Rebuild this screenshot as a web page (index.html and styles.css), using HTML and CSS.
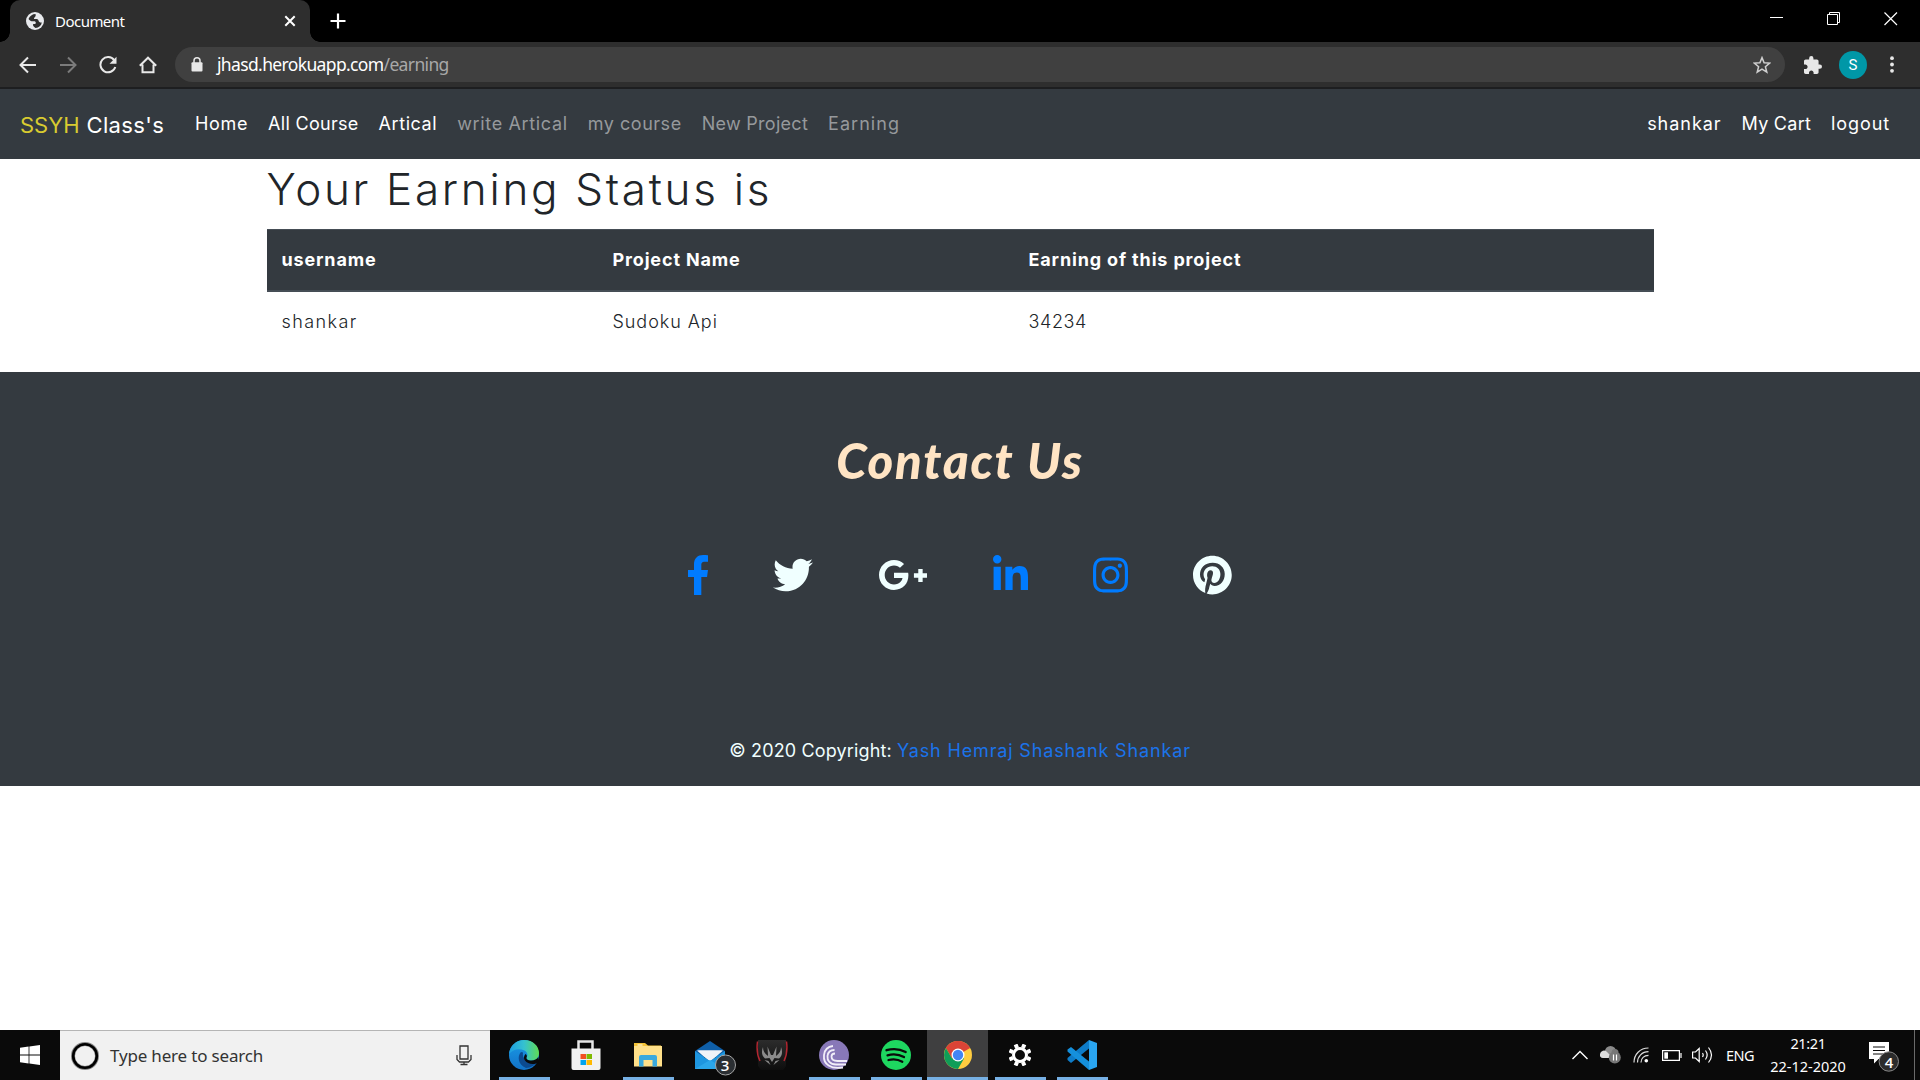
FILE: index.html
```html
<!DOCTYPE html>
<html lang="en">
<head>
<meta charset="utf-8">
<title>Document</title>
<link rel="stylesheet" href="styles.css">
</head>
<body>
<div class="screen">
  <header class="tabstrip">
    <div class="tab">
      <svg class="globe" width="18" height="18" viewBox="0 0 18 18"><circle cx="9" cy="9" r="9" fill="#e8eaed"/><path d="M9.500 2c-3 0-6 2-7 5 1.500 1.800 3.200 2.600 5 2.200 1.400-.2 2.400.4 2.300 1.700-.1 1.100-1.300 1.300-2.600 1.200-.6 1.300.2 3 2.400 3.900 3.300-.4 5.700-2.500 6.200-5.600-1.700.2-3-.4-3.200-1.700-.3-1.500-1.700-1.900-3.300-1.600-1.300.2-1.800-.9-.8-1.700 1.100-.9 1.500-1.900 1-3.400z" fill="#2e2e2e"/></svg>
      <span class="tab-title">Document</span>
      <svg class="tab-close" width="12" height="12" viewBox="0 0 12 12"><path d="M1.300 1.300l9.400 9.400M10.700 1.300l-9.400 9.400" stroke="#fff" stroke-width="2"/></svg>
    </div>
    <svg class="new-tab" width="16" height="16" viewBox="0 0 16 16"><path d="M8 .5v15M.5 8h15" stroke="#fff" stroke-width="2.200"/></svg>
    <div class="window-buttons">
      <svg width="14" height="14" viewBox="0 0 14 14"><path d="M0 5.500h13" stroke="#fff"/></svg>
      <svg width="14" height="14" viewBox="0 0 14 14"><path d="M.5 2.500h10v10H.5zM2.500 2.500v-2h10v10h-2" fill="none" stroke="#fff"/></svg>
      <svg width="14" height="14" viewBox="0 0 14 14"><path d="M.5 .5l12.500 12.500M13 .5L.5 13" stroke="#fff" stroke-width="1.200"/></svg>
    </div>
  </header>
  <div class="toolbar">
    <div class="nav-buttons">
      <svg width="18" height="18" viewBox="0 0 18 18"><path d="M17 9H2M9 1.500L1.500 9 9 16.500" fill="none" stroke="#e8e8e8" stroke-width="2"/></svg>
      <svg width="18" height="18" viewBox="0 0 18 18"><path d="M1 9h15M9 1.500L16.500 9 9 16.500" fill="none" stroke="#7b7b7b" stroke-width="2"/></svg>
      <svg width="18" height="18" viewBox="0 0 18 18"><path d="M15.200 4.200A7.600 7.600 0 1 0 16.300 11" fill="none" stroke="#e8e8e8" stroke-width="2"/><path d="M17.500 .8v7h-7z" fill="#e8e8e8"/></svg>
      <svg width="18" height="18" viewBox="0 0 18 18"><path d="M.8 9.700L9 1.700l8.200 8M3.500 8.500v7.700h11V8.500" fill="none" stroke="#e8e8e8" stroke-width="2"/></svg>
    </div>
    <div class="omnibox">
      <svg class="lock" width="12" height="15" viewBox="0 0 12 15"><rect x=".5" y="5.200" width="11" height="9.300" rx="1" fill="#e8e8e8"/><path d="M3 6V3.800a3 3 0 0 1 6 0V6" fill="none" stroke="#e8e8e8" stroke-width="1.500"/></svg>
      <span class="url"><span class="url-host">jhasd.herokuapp.com</span><span class="url-path">/earning</span></span>
      <svg class="star" width="18" height="18" viewBox="0 0 18 18"><path d="M9 1.600l2.100 5.100 5.600.4-4.300 3.600 1.400 5.400L9 13.200l-4.800 2.900 1.400-5.400L1.300 7.100l5.600-.4z" fill="none" stroke="#cfcfcf" stroke-width="1.500"/></svg>
    </div>
    <svg class="puzzle" width="18" height="18" viewBox="2 1 21 21"><path d="M20.500 11H19V7c0-1.100-.9-2-2-2h-4V3.500a2.500 2.500 0 0 0-5 0V5H4c-1.100 0-2 .9-2 2v3.800h1.500c1.500 0 2.700 1.200 2.700 2.700S5 16.200 3.500 16.200H2V20c0 1.100.9 2 2 2h3.800v-1.500c0-1.500 1.200-2.700 2.700-2.700s2.700 1.200 2.700 2.700V22H17c1.100 0 2-.9 2-2v-4h1.500a2.500 2.500 0 0 0 0-5z" fill="#e8e8e8"/></svg>
    <div class="avatar">S</div>
    <svg class="kebab" width="4" height="17" viewBox="0 0 4 17"><g fill="#e8e8e8"><circle cx="2" cy="2.200" r="1.900"/><circle cx="2" cy="8.500" r="1.900"/><circle cx="2" cy="14.800" r="1.900"/></g></svg>
  </div>

  <main class="page">
    <nav class="navbar">
      <a class="brand"><span class="brand-mark">SSYH</span> <span class="brand-name">Class's</span></a>
      <a class="link l-home">Home</a>
      <a class="link l-all">All Course</a>
      <a class="link l-art">Artical</a>
      <a class="link dim l-write">write Artical</a>
      <a class="link dim l-my">my course</a>
      <a class="link dim l-new">New Project</a>
      <a class="link dim l-earn">Earning</a>
      <a class="link first-right l-user">shankar</a>
      <a class="link l-cart">My Cart</a>
      <a class="link l-out">logout</a>
    </nav>
    <section class="container">
      <h1>Your Earning Status is</h1>
      <table>
        <thead><tr><th class="c1">username</th><th class="c2">Project Name</th><th>Earning of this project</th></tr></thead>
        <tbody><tr><td class="user">shankar</td><td class="project">Sudoku Api</td><td class="amount">34234</td></tr></tbody>
      </table>
    </section>
    <footer class="footer">
      <h2>Contact Us</h2>
      <div class="social">
        <svg class="blue" width="20.600" height="40" viewBox="0 0 264 512"><path d="M76.700 512V283H0v-91h76.700v-71.700C76.700 42.400 124.300 0 193.800 0c33.300 0 61.900 2.500 70.200 3.600V85h-48.200c-37.800 0-45.100 18-45.100 44.300V192H256l-11.700 91h-73.600v229"/></svg>
        <svg width="40" height="40" viewBox="0 0 512 512"><path d="M459.370 151.716c.325 4.548.325 9.097.325 13.645 0 138.720-105.583 298.558-298.558 298.558-59.452 0-114.680-17.219-161.137-47.106 8.447.974 16.568 1.299 25.340 1.299 49.055 0 94.213-16.568 130.274-44.832-46.132-.975-84.792-31.188-98.112-72.772 6.498.974 12.995 1.624 19.818 1.624 9.421 0 18.843-1.300 27.614-3.573-48.081-9.747-84.143-51.980-84.143-102.985v-1.299c13.969 7.797 30.214 12.670 47.431 13.319-28.264-18.843-46.781-51.005-46.781-87.391 0-19.492 5.197-37.360 14.294-52.954 51.655 63.675 129.300 105.258 216.365 109.807-1.624-7.797-2.599-15.918-2.599-24.040 0-57.828 46.782-104.934 104.934-104.934 30.213 0 57.502 12.670 76.670 33.137 23.715-4.548 46.456-13.320 66.599-25.340-7.798 24.366-24.366 44.833-46.132 57.827 21.117-2.273 41.584-8.122 60.426-16.243-14.292 20.791-32.161 39.308-52.628 54.253z"/></svg>
        <svg width="50" height="40" viewBox="0 0 640 512"><path d="M386.061 228.496c1.834 9.692 3.143 19.384 3.143 31.956C389.204 370.205 315.599 448 204.800 448c-106.084 0-192-85.915-192-192s85.916-192 192-192c51.864 0 95.083 18.859 128.611 50.292l-52.126 50.030c-14.145-13.621-39.028-29.599-76.485-29.599-65.484 0-118.920 54.221-118.920 121.277 0 67.056 53.436 121.277 118.920 121.277 75.961 0 104.513-54.745 108.965-82.773H204.800v-66.009h181.261zm185.406 6.437V179.200h-56.001v55.733h-55.733v56.001h55.733v55.733h56.001v-55.733H627.200v-56.001h-55.733z"/></svg>
        <svg class="blue" width="35" height="40" viewBox="0 0 448 512"><path d="M100.300 448H7.400V148.900h92.900zM53.800 108.100C24.100 108.100 0 83.500 0 53.800S24.100 0 53.800 0s53.800 24.100 53.800 53.800-24.100 54.300-53.800 54.300zM447.900 448h-92.700V302.400c0-34.700-.7-79.200-48.300-79.200-48.300 0-55.700 37.700-55.700 76.700V448h-92.800V148.900h89.100v40.800h1.300c12.400-23.500 42.700-48.300 87.900-48.300 94 0 111.300 61.900 111.300 142.300V448z"/></svg>
        <svg class="blue" width="35" height="40" viewBox="0 0 448 512"><path d="M224.100 141c-63.600 0-114.900 51.300-114.900 114.900s51.300 114.900 114.900 114.900S339 319.500 339 255.900 287.700 141 224.100 141zm0 189.600c-41.100 0-74.700-33.500-74.700-74.700s33.500-74.700 74.700-74.700 74.700 33.500 74.700 74.700-33.600 74.700-74.700 74.700zm146.400-194.300c0 14.900-12 26.800-26.800 26.800-14.900 0-26.800-12-26.800-26.800s12-26.800 26.800-26.800 26.800 12 26.800 26.800zm76.100 27.200c-1.700-35.900-9.900-67.700-36.200-93.900-26.200-26.200-58-34.400-93.900-36.200-37-2.100-147.900-2.100-184.900 0-35.800 1.700-67.600 9.900-93.900 36.100s-34.400 58-36.200 93.900c-2.100 37-2.100 147.900 0 184.900 1.700 35.900 9.900 67.700 36.200 93.900s58 34.400 93.900 36.200c37 2.100 147.900 2.100 184.900 0 35.900-1.700 67.700-9.900 93.900-36.200 26.200-26.200 34.400-58 36.200-93.900 2.100-37 2.100-147.800 0-184.800zM398.800 388c-7.800 19.600-22.900 34.700-42.600 42.600-29.500 11.700-99.500 9-132.100 9s-102.700 2.600-132.100-9c-19.600-7.800-34.700-22.900-42.600-42.600-11.700-29.500-9-99.500-9-132.100s-2.600-102.700 9-132.100c7.800-19.600 22.900-34.700 42.600-42.600 29.500-11.700 99.500-9 132.100-9s102.700-2.600 132.100 9c19.600 7.800 34.700 22.900 42.600 42.600 11.700 29.500 9 99.500 9 132.100s2.700 102.700-9 132.100z"/></svg>
        <svg width="38.750" height="40" viewBox="0 0 496 512"><path d="M496 256c0 137-111 248-248 248-25.600 0-50.200-3.900-73.400-11.100 10.100-16.500 25.200-43.500 30.800-65 3-11.600 15.400-59 15.400-59 8.100 15.400 31.700 28.500 56.800 28.500 74.800 0 128.700-68.800 128.700-154.300 0-81.900-66.900-143.200-152.900-143.200-107 0-163.900 71.800-163.900 150.100 0 36.400 19.400 81.700 50.300 96.100 4.700 2.200 7.200 1.200 8.300-3.300.8-3.400 5-20.300 6.900-28.100.6-2.500.3-4.700-1.700-7.100-10.100-12.500-18.300-35.300-18.300-56.600 0-54.700 41.400-107.600 112-107.600 60.900 0 103.600 41.500 103.600 100.900 0 67.100-33.900 113.600-78 113.600-24.300 0-42.600-20.100-36.700-44.800 7-29.500 20.500-61.300 20.500-82.600 0-19-10.200-34.900-31.400-34.900-24.900 0-44.900 25.700-44.900 60.200 0 22 7.400 36.800 7.400 36.800s-24.500 103.800-29 123.200c-5 21.400-3 51.600-.9 71.200C65.400 450.900 0 361.100 0 256 0 119 111 8 248 8s248 111 248 248z"/></svg>
      </div>
      <p class="copyright"><span class="c-text">© 2020 Copyright:</span><a class="c-link">Yash Hemraj Shashank Shankar</a></p>
    </footer>
  </main>

  <div class="taskbar">
    <div class="start"><svg width="20" height="20" viewBox="0 0 20 20"><path d="M0 2.800L8.600 1.500v8H0zM9.400 1.400L20 0v9.500H9.400zM0 10.400h8.600v8L0 17.200zM9.400 10.400H20V20L9.400 18.500z" fill="#fff"/></svg></div>
    <div class="search">
      <svg width="28" height="28" viewBox="0 0 28 28"><circle cx="14" cy="14" r="12" fill="none" stroke="#888" stroke-width="4"/><circle cx="14" cy="14" r="11.800" fill="none" stroke="#000" stroke-width="2.600"/></svg>
      <span class="search-text">Type here to search</span>
      <svg class="mic" width="16" height="21" viewBox="0 0 16 21"><path d="M4 1h8v13H4zM1 10v4.500L3.500 17h9l2.500-2.500V10M8 17v3M4.500 19.500h7" fill="none" stroke="#333" stroke-width="1.300"/></svg>
    </div>
    <div class="apps">
      <div class="app run"><svg width="30" height="30" viewBox="0 0 30 30"><defs><linearGradient id="eg" x1="0" x2="1"><stop offset="0" stop-color="#1b9de2"/><stop offset=".5" stop-color="#35c1d0"/><stop offset="1" stop-color="#5fdc54"/></linearGradient><linearGradient id="eb" x1="0" x2="0" y1="0" y2="1"><stop offset="0" stop-color="#1a9be6"/><stop offset="1" stop-color="#1272c8"/></linearGradient></defs><circle cx="15" cy="15" r="15" fill="url(#eb)"/><path d="M0 14C1 5 8 0 15 0c9 0 15 6 15 13 0 5-3.500 7.500-7.500 7.500-4 0-5.500-1.500-5-3 1.500-1.500 1.500-5-2-7C10 8 4 9 0 14z" fill="url(#eg)"/><path d="M12 12c-4 4-3 13 5 16 5 0 9-3 11.500-6.500-3 1.300-8 1.600-11.500-1-3-2.200-3.500-5-3-8z" fill="#0c4a90"/><path d="M17.500 17.500c-.5 1.500 1 3 5 3 3 0 5.500-1.300 6.800-3.500L30 23l-3 .500c-4 1.500-9 0-11-3-1.500-2-1.500-4 .5-6.500 1.500 1 1.700 2.500 1 3.500z" fill="#0a0a0a"/></svg></div>
      <div class="app"><svg width="30" height="30" viewBox="0 0 30 30"><path d="M7.500 10V1.500h14V10" fill="none" stroke="#e8e8e8" stroke-width="2.500"/><path d="M.5 8.500h29V28a2 2 0 0 1-2 2h-25a2 2 0 0 1-2-2z" fill="#f1f1f1"/><path d="M9.500 14H15v5H9.500z" fill="#f25022"/><path d="M15.500 14H21v5h-5.500z" fill="#7fba00"/><path d="M9.500 20H15v5H9.500z" fill="#00a4ef"/><path d="M15.500 20H21v5h-5.500z" fill="#ffb900"/></svg></div>
      <div class="app run"><svg width="28" height="26" viewBox="0 0 28 26"><path d="M0 1h11l3 2.500h13V12H0z" fill="#f4c338"/><path d="M3.500 2.500h5v1h-5z" fill="#fff"/><path d="M0 4h28v20.500H0z" fill="#ffe08a"/><path d="M5 24.500V15a2 2 0 0 1 2-2h14a2 2 0 0 1 2 2v9.500h-4.500V18h-9v6.500z" fill="#3aa9de"/></svg></div>
      <div class="app mail"><svg width="42" height="36" viewBox="0 0 42 36"><path d="M1 11L16 1l15 10v6H1z" fill="#0f5fa8"/><path d="M3 10.500h26L16 22z" fill="#f2f4f8"/><path d="M1 11l15 10 15-10v18H1z" fill="#1e96e0"/><path d="M4 10.500h24L16 19.500z" fill="#f2f4f8"/><path d="M1 29L16 20l15 9z" fill="#2ba6ea"/><circle cx="31.500" cy="25" r="10" fill="#2b2f33" stroke="#a5a5a5"/></svg><span class="mail-count">3</span></div>
      <div class="app"><svg width="32" height="30" viewBox="0 0 32 30"><defs><linearGradient id="pd" x1="0" x2="0" y1="0" y2="1"><stop offset="0" stop-color="#2c2c2c"/><stop offset="1" stop-color="#0e0e0e"/></linearGradient></defs><path d="M2 0h28v26l-3 4H5l-3-4z" fill="url(#pd)"/><path d="M1.500 1.500C.5 9 2 17 4 21M30.500 1.500c1 7.500-.5 15.500-2.500 19.500" stroke="#b32630" stroke-width="1.500" fill="none"/><path d="M7 7c0 4 1.500 6.500 5 9l-.5-9.500L15 15h2l3.500-8.500-.5 9.500c3.500-2.500 5-5 5-9 2 5 1 9-2 11.500L18.500 18 16 22l-2.500-4L9 18.500C6 16 5 12 7 7zM8.500 20l4 1 2 4zM23.500 20l-4 1-2 4z" fill="#8b8b8b"/></svg></div>
      <div class="app run"><svg width="30" height="30" viewBox="0 0 30 30"><circle cx="15" cy="15" r="15" fill="#8878b8"/><path d="M27 24.500H17c-6 0-9-4-8.500-8.500.4-3.500 3-6 7-6M24 27.500c-12 2-20-3-19-12.500.6-5 4-8.500 9-9M28 21h-9.500c-4 0-6-2-6-4.500 0-1.500 1-3 3.500-3" fill="none" stroke="#f1eef8" stroke-width="1.800"/></svg></div>
      <div class="app run"><svg width="30" height="30" viewBox="0 0 30 30"><circle cx="15" cy="15" r="15" fill="#1ed760"/><path d="M5.500 10.200c7-2 13.500-1.200 19.200 1.800M6.500 15.300c6-1.600 11.500-1 16.500 1.800M7.500 20c5-1.300 9.500-.8 13.800 1.700" fill="none" stroke="#0a0a0a" stroke-width="2.300" stroke-linecap="round"/></svg></div>
      <div class="app run active"><svg width="28" height="28" viewBox="0 0 28 28"><circle cx="14" cy="14" r="14" fill="#ffcd40"/><path d="M14 14L1.900 7A14 14 0 0 1 26.100 7z" fill="#db4437"/><path d="M14 7h12.100A14 14 0 0 0 1.900 7L8 17.500z" fill="#db4437"/><path d="M1.900 7A14 14 0 0 0 14 28l6-10.500L14 14l-6 3.500z" fill="#0f9d58"/><circle cx="14" cy="14" r="6.500" fill="#fff"/><circle cx="14" cy="14" r="5.200" fill="#4285f4"/></svg></div>
      <div class="app run"><svg width="22" height="22" viewBox="0 0 22 22"><circle cx="11" cy="11" r="6.500" fill="none" stroke="#fff" stroke-width="3"/><g stroke="#fff" stroke-width="4"><path d="M6.600 .4l1.500 3.600M13.900 18l1.500 3.600M15.400 .4L13.900 4M8.100 18l-1.500 3.600M.4 6.600L4 8.100M18 13.900l3.600 1.500M.4 15.400L4 13.900M18 8.100l3.600-1.500"/></g></svg></div>
      <div class="app run"><svg width="30" height="30" viewBox="0 0 30 30"><path d="M22 0l8 3v24l-8 3z" fill="#2aa5f0"/><path d="M22 0v8.500L4 23l-3.500-3v-2z" fill="#0e7cc8"/><path d="M22 30v-8.500L4 7 .5 9.500v2z" fill="#1590dc"/></svg></div>
    </div>
    <div class="tray">
      <svg class="t-up" width="16" height="10" viewBox="0 0 16 10"><path d="M.5 9L8 1.500 15.500 9" fill="none" stroke="#fff" stroke-width="1.400"/></svg>
      <svg class="t-cloud" width="21" height="18" viewBox="0 0 21 18"><circle cx="10.500" cy="5.500" r="5.500" fill="#8b8b8b"/><circle cx="15" cy="6.500" r="3.500" fill="#777"/><path d="M0 8a4 4 0 0 1 7-2l6 6H3a3 3 0 0 1-3-4z" fill="#ddd"/><circle cx="14.800" cy="11.600" r="6" fill="#777"/><path d="M13.500 8.500v6M16.500 8.500v6" stroke="#fff" stroke-width="1.200"/></svg>
      <svg class="t-wifi" width="16" height="16" viewBox="0 0 16 16"><path d="M1 15.500C1 7.500 7 1 15.500 1M4.500 15.500C4.500 9.500 9 4.700 15.500 4.700M8 15.500c0-4 3-7.200 7.500-7.200" fill="none" stroke="#ddd" stroke-width="1.200"/><circle cx="13.300" cy="13.800" r="1.800" fill="#fff"/></svg>
      <svg class="t-batt" width="20" height="11" viewBox="0 0 20 11"><path d="M.6 .6h16.800v9.800H.6zM19 3v5" fill="none" stroke="#fff" stroke-width="1.200"/><path d="M2.300 2.300H6v6.400H2.300z" fill="#fff"/></svg>
      <svg class="t-vol" width="21" height="18" viewBox="0 0 21 18"><path d="M.6 6h2.900L7.200 2.500v13L3.500 12H.6zM10.500 7q1.400 2 0 4M13.500 4.500q3.300 4.500 0 9M16.500 1.500q6 7.500 0 15" fill="none" stroke="#fff" stroke-width="1.200"/></svg>
      <span class="lang">ENG</span>
      <div class="clock"><span class="time">21:21</span><span class="date">22-12-2020</span></div>
      <div class="notice"><svg width="30" height="32" viewBox="0 0 30 32"><path d="M0 1h20v17H9.500L5 22.500V18H0z" fill="#fff"/><path d="M4 6h12M4 9.500h12M4 13h12" stroke="#0a0a0a" stroke-width="1.200"/><circle cx="19.800" cy="20.500" r="9.700" fill="#2c2c2c" stroke="#8a8a8a"/></svg><span class="notice-count">4</span></div>
      <div class="peek"></div>
    </div>
  </div>
</div>
</body>
</html>
```
FILE: styles.css
```css
* { box-sizing: border-box; }
body { margin: 0; background: #fff; }
svg { display: block; flex: none; }
.screen { width: 1920px; height: 1080px; display: flex; flex-direction: column; overflow: hidden; font-family: "Noto Sans", "Open Sans", sans-serif; }

.tabstrip { height: 42px; background: #000; display: flex; align-items: flex-start; flex: none; padding-left: 10px; }
.tab { position: relative; width: 300px; height: 42px; background: #2e2e2e; border-radius: 10px 10px 0 0; display: flex; align-items: center; padding: 0 14px 0 16px; }
.tab::before, .tab::after { content: ""; position: absolute; bottom: 0; width: 10px; height: 10px; }
.tab::before { left: -10px; background: radial-gradient(circle at 0 0, #000 9.500px, #2e2e2e 10px); }
.tab::after { right: -10px; background: radial-gradient(circle at 100% 0, #000 9.500px, #2e2e2e 10px); }
.tab-title { margin-left: 11px; color: #fff; font-size: 15px; line-height: 20px; letter-spacing: -.53px; padding-bottom: 1px; }
.tab-close { margin-left: auto; }
.new-tab { margin: 13px 0 0 20px; }
.window-buttons { margin: 12px 22px 0 auto; display: flex; gap: 43px; }

.toolbar { height: 47px; flex: none; background: #2e2e2e; border-bottom: 2px solid #1d1e20; display: flex; align-items: center; }
.nav-buttons { display: flex; gap: 22px; margin-left: 19px; }
.omnibox { width: 1610px; height: 35px; margin-left: 18px; border-radius: 18px; background: #404040; display: flex; align-items: center; padding: 0 14px 0 16px; }
.url { margin-left: 14px; font-size: 17.500px; line-height: 24px; display: flex; padding-bottom: 1px; letter-spacing: -.64px; }
.url-host { color: #fff; }
.url-path { color: #a8a8a8; }
.star { margin-left: auto; }
.puzzle { margin-left: 19px; }
.avatar { width: 28px; height: 28px; border-radius: 50%; margin-left: 17px; background: #0097a7; color: #fff; font: 15px/28px Roboto, sans-serif; text-align: center; }
.kebab { margin-left: 23px; }

.page { flex: 1; background: #fff; font-family: Inter, Roboto, sans-serif; font-size: 18px; color: #212529; min-height: 0; }
.navbar { height: 70px; background: #343a40; display: flex; align-items: center; padding: 0 20px; }
.brand { display: flex; gap: 7px; font-size: 22px; line-height: 30px; width: 165px; padding-top: 2px; color: #fff; }
.brand-mark { color: #d9cb30; }
.brand-name { letter-spacing: .35px; }
.link { padding: 0 10px; line-height: 30px; color: #fff; white-space: nowrap; }
.dim { color: #96999c; }
.l-home { letter-spacing: .65px; }
.l-all { letter-spacing: .3px; }
.l-art { letter-spacing: .56px; }
.l-write { letter-spacing: .65px; }
.l-my { letter-spacing: .53px; }
.l-new { letter-spacing: .28px; }
.l-earn { letter-spacing: 1.040px; }
.l-user { letter-spacing: .97px; }
.l-cart { letter-spacing: .25px; }
.l-out { letter-spacing: .9px; }
.first-right { margin-left: auto; }

.container { width: 1387px; margin: 0 auto 20px; }
h1 { margin: 0 0 10px; font-size: 44px; line-height: 60px; font-weight: 300; letter-spacing: 2.700px; }
table { width: 1387px; border-collapse: separate; border-spacing: 0; table-layout: fixed; }
th, td { text-align: left; padding: 15px; line-height: 30px; }
th { background: #343a40; color: #fff; font-weight: 700; letter-spacing: .85px; border-top: 1px solid #454d55; border-bottom: 2px solid #454d55; }
td { font-weight: 300; }
.user { letter-spacing: 1.400px; }
.project { letter-spacing: .95px; }
.amount { letter-spacing: .6px; }
.c1 { width: 331px; }
.c2 { width: 416px; }

.footer { height: 414px; background: #343a40; display: flex; flex-direction: column; align-items: center; color: azure; }
h2 { margin: 58px 0 0; font: italic 900 49px/60px Lato, sans-serif; letter-spacing: 1.900px; color: bisque; }
.social { display: flex; gap: 65px; margin-top: 65px; fill: azure; }
.blue { fill: #007bff; }
.copyright { margin: auto 0 20px; line-height: 30px; display: flex; gap: 5px; }
.c-text { letter-spacing: .15px; }
.c-link { color: #1b73ea; letter-spacing: .85px; }

.taskbar { height: 50px; flex: none; background: #0a0a0a; display: flex; color: #fff; }
.start { width: 60px; display: flex; align-items: center; justify-content: center; }
.search { width: 430px; background: #f1f1f1; border-top: 1px solid #b5b5b5; display: flex; align-items: center; padding: 0 18px 0 11px; color: #333; }
.search-text { margin-left: 11px; font-size: 17px; line-height: 24px; letter-spacing: -.18px; }
.mic { margin-left: auto; }
.apps { display: flex; margin-left: 3px; }
.app { position: relative; width: 62px; height: 50px; display: flex; align-items: center; justify-content: center; }
.run::after { content: ""; position: absolute; left: 6px; right: 5px; bottom: 0; height: 3px; background: #76b0e4; }
.active { background: #3f3f40; width: 61px; margin-right: 1px; }
.active::after { left: 0; right: 0; }
.mail { padding: 6px 0 0 10px; }
.mail-count { position: absolute; left: 36px; top: 24px; width: 20px; font: 600 15px/22px "Open Sans", sans-serif; text-align: center; }
.tray { margin-left: auto; display: flex; align-items: center; height: 50px; }
.t-cloud { margin-left: 12px; }
.t-wifi { margin-left: 12px; }
.t-batt { margin-left: 13px; }
.t-vol { margin-left: 10px; }
.lang { margin-left: 13px; font-size: 14.500px; width: 28px; white-space: nowrap; letter-spacing: -.5px; }
.clock { width: 76px; margin-left: 16px; display: flex; flex-direction: column; align-items: center; font-size: 14.500px; line-height: 23px; white-space: nowrap; }
.time { letter-spacing: -.4px; }
.notice { position: relative; margin-left: 23px; padding-top: 3px; }
.notice-count { position: absolute; left: 10px; top: 13px; width: 20px; font: 600 15px/22px "Open Sans", sans-serif; text-align: center; }
.peek { width: 6px; height: 50px; border-left: 1px solid #6a6a6a; margin-left: 15px; }
```
